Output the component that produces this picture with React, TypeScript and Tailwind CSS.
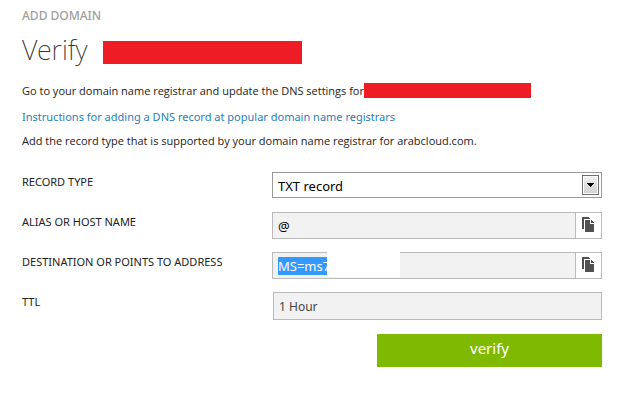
import { useEffect, useRef, useState } from "react";

function CopyIcon() {
  return (
    <svg width="12" height="15" viewBox="0 0 12 15" shapeRendering="crispEdges" aria-hidden="true">
      <path d="M0 0h7v1h1v1H2v10H0z" fill="#505050" />
      <path d="M3 3h5v4h4v8H3z" fill="#505050" />
      <path d="M9 3h1v1h1v1h1v1H9z" fill="#505050" />
    </svg>
  );
}

function CopyButton({ label, value }: { label: string; value: string }) {
  return (
    <button
      type="button"
      aria-label={label}
      onClick={() => navigator.clipboard?.writeText(value)}
      className="flex w-[27px] shrink-0 justify-center border border-[#bababa] bg-white pt-1 pr-px"
    >
      <CopyIcon />
    </button>
  );
}

const rowClass = "grid h-10 grid-cols-[250px_minmax(0,1fr)] items-start";
const labelClass = "pt-0.5 text-[11px] leading-4 text-[#222]";
const hintClass = "font-['Open_Sans','Noto_Sans',sans-serif] text-[11px] leading-4 font-medium text-[#222]";
const inputClass =
  "h-[27px] min-w-0 flex-1 border border-[#bababa] bg-[#f2f2f2] px-[5px] text-[13px] text-black outline-none";

export default function App() {
  const [recordType, setRecordType] = useState("TXT");
  const destinationRef = useRef<HTMLInputElement>(null);

  useEffect(() => {
    destinationRef.current?.focus();
    destinationRef.current?.select();
  }, []);

  return (
    <main className="bg-white pt-2 pr-4 pb-8 pl-[22px] font-['Noto_Sans','Open_Sans',sans-serif]">
      <p className="text-xs leading-4 font-medium text-[#a0a0a0]">ADD DOMAIN</p>
      <h1 className="mt-2 flex h-10 items-center gap-[15px] text-[27px] leading-10 font-extralight text-[#333]">
        <span className="-mt-1">Verify</span>
        <span className="h-[23px] w-[199px] bg-[#ee1c24]" />
      </h1>

      <p className={`mt-2.5 flex h-4 items-center ${hintClass}`}>
        <span className="pt-px">Go to your domain name registrar and update the DNS settings for</span>
        <span className="h-[15px] w-[167px] bg-[#ee1c24]" />
      </p>
      <p className="mt-[11px] text-[11px] leading-4">
        <a href="#instructions" className="text-[#1f7fb8]">
          Instructions for adding a DNS record at popular domain name registrars
        </a>
      </p>
      <p className={`mt-2 ${hintClass}`}>
        Add the record type that is supported by your domain name registrar for arabcloud.com.
      </p>

      <form className="mt-[23px]" onSubmit={(e) => e.preventDefault()}>
        <div className={rowClass}>
          <label htmlFor="record-type" className={labelClass}>
            RECORD TYPE
          </label>
          <div className="relative">
            <select
              id="record-type"
              className="block h-[26px] w-full appearance-none border border-[#999] bg-white px-[5px] pt-1 text-[13px] text-black outline-none"
              value={recordType}
              onChange={(e) => setRecordType(e.target.value)}
            >
              <option value="TXT">TXT record</option>
              <option value="MX">MX record</option>
            </select>
            <span className="pointer-events-none absolute top-[3px] right-[3px] flex h-5 w-[17px] items-center justify-center border border-[#707070] bg-linear-to-b from-[#f2f2f2] to-[#d0d0d0] ring-1 ring-white ring-inset">
              <svg width="7" height="4" viewBox="0 0 7 4" aria-hidden="true">
                <path d="M0 0h7v1H6v1H5v1H4v1H3V3H2V2H1V1H0z" fill="#000" />
              </svg>
            </span>
          </div>
        </div>

        <div className={rowClass}>
          <label htmlFor="alias" className={labelClass}>
            ALIAS OR HOST NAME
          </label>
          <div className="flex">
            <input id="alias" type="text" readOnly value="@" className={`${inputClass} border-r-0`} />
            <CopyButton label="Copy host name" value="@" />
          </div>
        </div>

        <div className={rowClass}>
          <label htmlFor="destination" className={labelClass}>
            DESTINATION OR POINTS TO ADDRESS
          </label>
          <div className="relative flex">
            <input
              id="destination"
              ref={destinationRef}
              type="text"
              readOnly
              value="MS=ms7"
              className={`${inputClass} border-r-0 selection:bg-[#3399ff] selection:text-white`}
            />
            <span className="absolute -top-px left-[55px] h-[26px] w-[73px] bg-white" />
            <CopyButton label="Copy destination" value="MS=ms7" />
          </div>
        </div>

        <div className={rowClass}>
          <label htmlFor="ttl" className={labelClass}>
            TTL
          </label>
          <div className="flex pl-px">
            <input
              id="ttl"
              type="text"
              readOnly
              value="1 Hour"
              className="h-7 min-w-0 flex-1 border border-[#bababa] bg-[#f2f2f2] px-[5px] text-xs text-[#444] outline-none"
            />
          </div>
        </div>

        <div className="mt-0.5 flex justify-end">
          <button type="submit" className="h-[33px] w-[225px] bg-[#80ba00] pb-1 text-[15px] text-white">
            verify
          </button>
        </div>
      </form>
    </main>
  );
}
